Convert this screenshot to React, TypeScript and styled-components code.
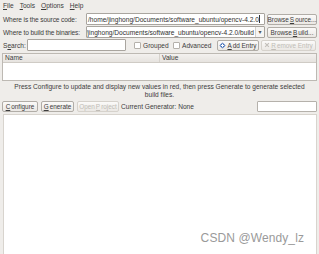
import styled, { createGlobalStyle } from "styled-components";

const GlobalStyle = createGlobalStyle`
  *, *::before, *::after {
    box-sizing: border-box;
  }
  html, body {
    margin: 0;
    padding: 0;
    background: #ffffff;
  }
  body {
    font-family: "Liberation Sans", "DejaVu Sans", sans-serif;
  }
`;

const App = () => {
  return (
    <>
      <GlobalStyle />
      <Window>
        <MenuBar>
          <MenuItem><u>F</u>ile</MenuItem>
          <MenuItem><u>T</u>ools</MenuItem>
          <MenuItem><u>O</u>ptions</MenuItem>
          <MenuItem><u>H</u>elp</MenuItem>
        </MenuBar>
        <Content>
          <FormRow>
            <Label>Where is the source code:</Label>
            <PathInput $align="flex-start">
              <span>/home/jinghong/Documents/software_ubuntu/opencv-4.2.0</span>
              <Caret />
            </PathInput>
            <Button $width={50}>
              Browse <u>S</u>ource...
            </Button>
          </FormRow>
          <FormRow>
            <Label>Where to build the binaries:</Label>
            <ComboInput>
              <PathInput $align="flex-end" $flat>
                <span>/home/jinghong/Documents/software_ubuntu/opencv-4.2.0/build</span>
              </PathInput>
              <ComboArrow>▾</ComboArrow>
            </ComboInput>
            <Button $width={50}>
              Browse <u>B</u>uild...
            </Button>
          </FormRow>
          <FormRow>
            <SearchLabel>
              S<u>e</u>arch:
            </SearchLabel>
            <SearchInput />
            <Check $width={37}>
              <Box />
              Grouped
            </Check>
            <Check $width={42}>
              <Box />
              Advanced
            </Check>
            <Button $width={42}>
              <AddIcon viewBox="0 0 8 8">
                <path d="M4 0.5 L7.5 4 L4 7.5 L0.5 4 Z" fill="#3d6bb8" />
                <path d="M4 2 V6 M2 4 H6" stroke="#fff" strokeWidth="1.2" />
              </AddIcon>
              <u>A</u>dd Entry
            </Button>
            <Button $width={55} $disabled>
              <RemoveIcon viewBox="0 0 8 8">
                <path d="M1.5 1.5 L6.5 6.5 M6.5 1.5 L1.5 6.5" stroke="#c3bfba" strokeWidth="1.6" />
              </RemoveIcon>
              <u>R</u>emove Entry
            </Button>
          </FormRow>
          <Table>
            <TableHead>
              <HeadCell $width={157}>Name</HeadCell>
              <HeadCell>Value</HeadCell>
            </TableHead>
            <TableBody />
          </Table>
          <Message>
            Press Configure to update and display new values in red, then press Generate to generate selected build files.
          </Message>
          <ActionRow>
            <Button $width={36}>
              <u>C</u>onfigure
            </Button>
            <Button $width={33}>
              <u>G</u>enerate
            </Button>
            <Button $width={42} $disabled>
              Open <u>P</u>roject
            </Button>
            <GeneratorText>Current Generator: None</GeneratorText>
            <GeneratorInput />
          </ActionRow>
          <Output>
            <Watermark>CSDN @Wendy_lz</Watermark>
          </Output>
        </Content>
      </Window>
    </>
  );
};

export default App;

const Window = styled.div`
  width: 319px;
  height: 254px;
  overflow: hidden;
  background: #efedea;
  color: #3c3c3c;
  font-size: 6.6px;
  display: flex;
  flex-direction: column;
`;

const MenuBar = styled.div`
  display: flex;
  gap: 6px;
  height: 11px;
  align-items: center;
  padding: 0 3px;
  flex-shrink: 0;
`;

const MenuItem = styled.span`
  line-height: 11px;
`;

const Content = styled.div`
  flex: 1;
  display: flex;
  flex-direction: column;
  gap: 1px;
  padding: 2px 2px 0 2px;
  min-height: 0;
`;

const FormRow = styled.div`
  display: flex;
  align-items: center;
  height: 12px;
  gap: 2px;
  flex-shrink: 0;
`;

const Label = styled.div`
  width: 82px;
  padding-left: 1px;
  white-space: nowrap;
  letter-spacing: -0.12px;
  flex-shrink: 0;
`;

const SearchLabel = styled.div`
  width: 23px;
  padding-left: 1px;
  flex-shrink: 0;
`;

const PathInput = styled.div<{ $align: string; $flat?: boolean }>`
  flex: 1;
  height: ${(p) => (p.$flat ? "10px" : "12px")};
  display: flex;
  align-items: center;
  justify-content: ${(p) => p.$align};
  overflow: hidden;
  white-space: nowrap;
  background: #fff;
  border: ${(p) => (p.$flat ? "none" : "1px solid #a9a59f")};
  border-radius: 1px;
  padding: 0 1px;
  color: #2f2f2f;
  min-width: 0;
`;

const Caret = styled.span`
  display: inline-block;
  width: 1px;
  height: 8px;
  background: #333;
  flex-shrink: 0;
`;

const ComboInput = styled.div`
  flex: 1;
  display: flex;
  align-items: center;
  height: 12px;
  background: #fff;
  border: 1px solid #a9a59f;
  border-radius: 1px;
  min-width: 0;
`;

const ComboArrow = styled.div`
  width: 9px;
  height: 10px;
  font-size: 6px;
  line-height: 10px;
  text-align: center;
  color: #555;
  border-left: 1px solid #d4d0ca;
  background: #f6f5f3;
  flex-shrink: 0;
`;

const Button = styled.div<{ $width: number; $disabled?: boolean }>`
  width: ${(p) => p.$width}px;
  height: 11px;
  flex-shrink: 0;
  display: flex;
  align-items: center;
  justify-content: center;
  gap: 1px;
  white-space: nowrap;
  border: 1px solid ${(p) => (p.$disabled ? "#d6d2cc" : "#b1ada7")};
  border-radius: 2px;
  background: linear-gradient(#fbfaf9, #ebe8e4);
  color: ${(p) => (p.$disabled ? "#c0bcb6" : "#3c3c3c")};
  font-size: 6.4px;
`;

const AddIcon = styled.svg`
  width: 7px;
  height: 7px;
`;

const RemoveIcon = styled.svg`
  width: 6px;
  height: 6px;
`;

const SearchInput = styled.div`
  width: 99px;
  height: 12px;
  flex-shrink: 0;
  background: #fff;
  border: 1px solid #a9a59f;
  border-radius: 1px;
  margin-right: 6px;
`;

const Check = styled.div<{ $width: number }>`
  width: ${(p) => p.$width}px;
  flex-shrink: 0;
  display: flex;
  align-items: center;
  gap: 2px;
  white-space: nowrap;
`;

const Box = styled.span`
  width: 7px;
  height: 7px;
  background: #fff;
  border: 1px solid #b5b1ab;
  border-radius: 1px;
`;

const Table = styled.div`
  margin-top: 1px;
  border: 1px solid #bdb9b3;
  display: flex;
  flex-direction: column;
  flex-shrink: 0;
`;

const TableHead = styled.div`
  display: flex;
  height: 9px;
  background: linear-gradient(#f3f1ef, #e6e3df);
  border-bottom: 1px solid #cfcbc5;
`;

const HeadCell = styled.div<{ $width?: number }>`
  width: ${(p) => (p.$width ? `${p.$width}px` : "auto")};
  flex: ${(p) => (p.$width ? "none" : 1)};
  padding-left: 2px;
  line-height: 8px;
  border-right: ${(p) => (p.$width ? "1px solid #d6d2cc" : "none")};
`;

const TableBody = styled.div`
  height: 17px;
  background: #fff;
`;

const Message = styled.div`
  padding: 1px 6px 0 6px;
  height: 18px;
  text-align: center;
  line-height: 8px;
  flex-shrink: 0;
`;

const ActionRow = styled.div`
  display: flex;
  align-items: center;
  gap: 3px;
  height: 11px;
  flex-shrink: 0;
`;

const GeneratorText = styled.div`
  flex: 1;
  margin-left: -1px;
  white-space: nowrap;
`;

const GeneratorInput = styled.div`
  width: 60px;
  height: 11px;
  background: #fff;
  border: 1px solid #b5b1ab;
  border-radius: 1px;
`;

const Output = styled.div`
  flex: 1;
  margin: 1px 0 0 1px;
  background: #fff;
  border-left: 1px solid #d8d4ce;
  border-right: 1px solid #d8d4ce;
  border-top: 1px solid #d8d4ce;
  display: flex;
  align-items: flex-end;
  justify-content: flex-end;
  padding: 0 12px 9px 0;
`;

const Watermark = styled.div`
  font-size: 12px;
  color: #9a9a9a;
  letter-spacing: 0.1px;
`;
